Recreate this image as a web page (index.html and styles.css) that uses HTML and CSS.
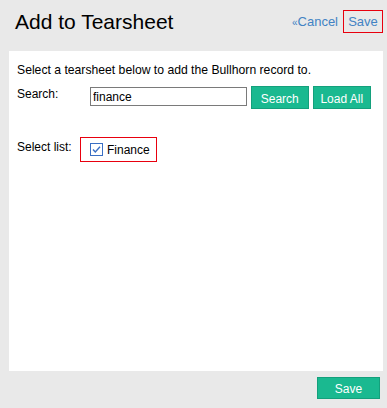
FILE: index.html
```html
<!DOCTYPE html>
<html lang="en">
<head>
    <meta charset="UTF-8">
    <meta name="viewport" content="width=device-width, initial-scale=1.0">
    <title>Add to Tearsheet</title>
    <link rel="stylesheet" href="styles.css">
</head>
<body>
    <header class="top">
        <h1>Add to Tearsheet</h1>
        <div class="actions">
            <a href="#" class="cancel"><span class="quote">&laquo;</span>Cancel</a>
            <a href="#" class="save-link">Save</a>
        </div>
    </header>

    <div class="panel">
        <p class="intro">Select a tearsheet below to add the Bullhorn record to.</p>

        <div class="row search-row">
            <label for="searchInput" class="label">Search:</label>
            <input type="text" id="searchInput" value="finance">
            <button class="btn">Search</button>
            <button class="btn">Load All</button>
        </div>

        <div class="row list-row">
            <span class="label">Select list:</span>
            <label class="pick">
                <svg class="check" width="13" height="13" viewBox="0 0 13 13">
                    <rect x="0.5" y="0.5" width="12" height="12" fill="#fff" stroke="#3a6fc4"/>
                    <path d="M3 6.5 L5.3 9 L10 3.8" fill="none" stroke="#3a6fc4" stroke-width="1.4"/>
                </svg>
                Finance
            </label>
        </div>
    </div>

    <div class="footer">
        <button class="btn save-btn">Save</button>
    </div>
</body>
</html>
```

FILE: styles.css
```css
body { margin: 0; background: #e9e9e9; font-family: "Liberation Sans", Arial, sans-serif; font-size: 12px; color: #000; }
.top { display: flex; justify-content: space-between; align-items: flex-start; height: 51px; padding: 0 4px 0 15px; box-sizing: border-box; }
h1 { margin: 10px 0 0; font-size: 21px; font-weight: normal; line-height: 24px; }
.actions { display: flex; align-items: center; margin-top: 10px; gap: 5px; }
.actions a { color: #4283c4; text-decoration: none; font-size: 13px; }
.quote { font-size: 10px; }
.save-link { display: block; border: 1px solid #e8000e; height: 21px; line-height: 21px; width: 38px; text-align: center; }
.panel { background: #fff; margin: 0 4px 0 9px; height: 320px; padding: 12px 8px 0; box-sizing: border-box; }
.intro { margin: 0; line-height: 15px; font-size: 12.2px; }
.row { display: flex; align-items: flex-start; }
.label { width: 73px; line-height: 15px; padding-top: 1px; flex: none; }
.search-row { margin-top: 8px; }
.search-row input { width: 157px; height: 19px; box-sizing: border-box; margin: 1px 4px 0 0; border: 1px solid #7a7a7a; padding: 0 2px; font: inherit; font-size: 12px; }
.btn { height: 23px; background: #1ab990; border: 1px solid #14a07c; color: #fff; font: inherit; font-size: 12px; padding: 2px 0 0; cursor: pointer; }
.search-row .btn { width: 59px; margin-right: 4px; }
.search-row .btn:last-child { width: 60px; }
.list-row { margin-top: 30px; }
.label + .pick { margin-left: -10px; }
.pick { display: flex; align-items: center; gap: 4px; width: 77px; height: 25px; box-sizing: border-box; border: 1px solid #e8000e; padding-left: 9px; margin-top: -2px; }
.check { flex: none; }
.footer { display: flex; justify-content: flex-end; padding: 6px 7px 0 0; }
.save-btn { width: 63px; height: 22px; padding-top: 1px; }
```
